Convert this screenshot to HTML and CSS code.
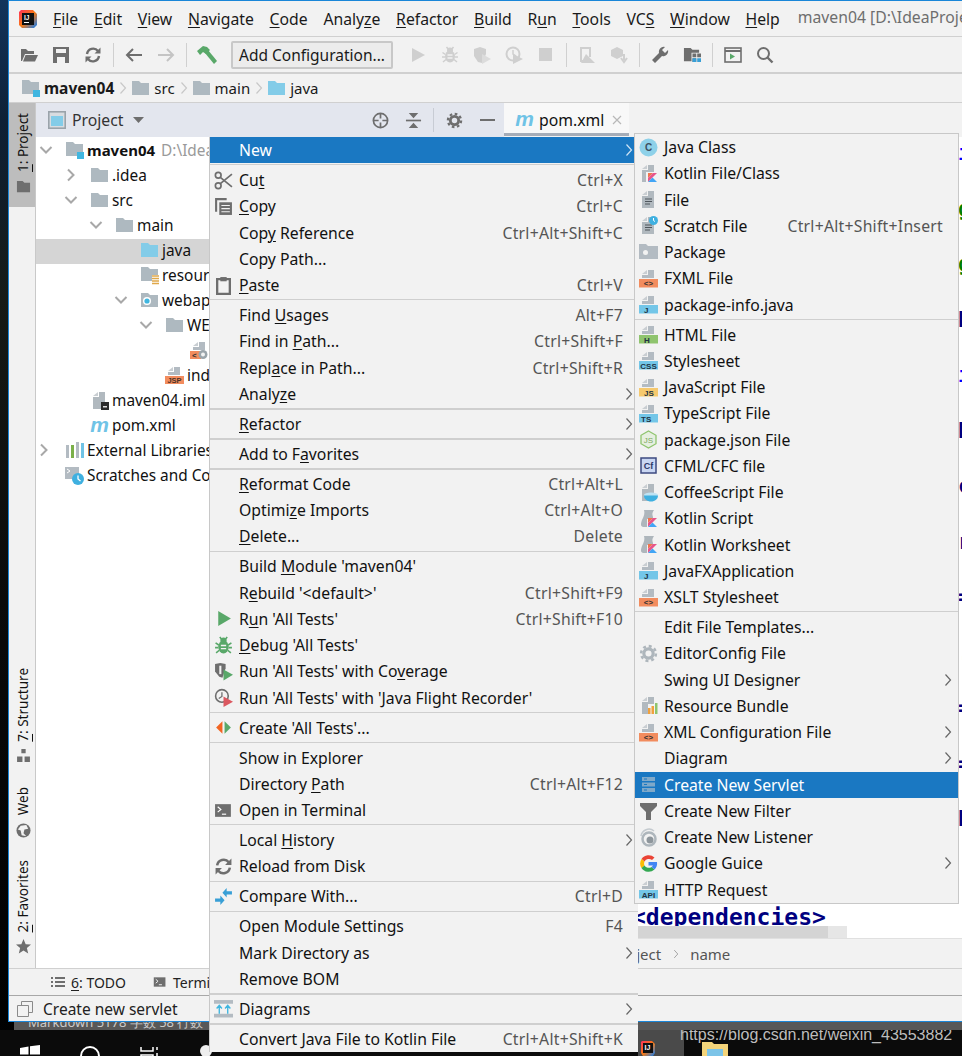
FILE: index.html
```html
<!DOCTYPE html>
<html lang="en">
<head>
<meta charset="utf-8">
<title>maven04</title>
<link rel="stylesheet" href="styles.css">
</head>
<body>
<svg class="defs" aria-hidden="true">
  <defs>
    <linearGradient id="ijg" x1="0" y1="0" x2="1" y2="1"><stop offset="0" stop-color="#fe315d"/><stop offset=".5" stop-color="#f97a12"/><stop offset="1" stop-color="#087cfa"/></linearGradient>
  </defs>
  <symbol id="folder" viewBox="0 0 19 19"><path d="M1 2h7l2 2h8v12H1z" fill="#aeb9c0"/></symbol>
  <symbol id="folder-blue" viewBox="0 0 19 19"><path d="M1 2h7l2 2h8v12H1z" fill="#83cce8"/></symbol>
  <symbol id="folder-mod" viewBox="0 0 19 19"><path d="M1 1h7l2 2h8v12H1z" fill="#aeb9c0"/><rect x="12" y="11" width="7" height="7" fill="#40b6e0"/></symbol>
  <symbol id="folder-res" viewBox="0 0 19 19"><path d="M1 1h7l2 2h8v12H1z" fill="#aeb9c0"/><rect x="12" y="9" width="7" height="9" fill="#fff"/><path d="M12 10h7M12 12.5h7M12 15h7M12 17.5h7" stroke="#e0a84a" stroke-width="1.4"/></symbol>
  <symbol id="folder-web" viewBox="0 0 19 19"><path d="M1 2h7l2 2h8v12H1z" fill="#aeb9c0"/><circle cx="7" cy="10" r="4" fill="#fff"/><circle cx="7" cy="10" r="2.6" fill="#40b6e0"/></symbol>
  <symbol id="ftop" viewBox="0 0 19 19"><path d="M9 1h6v8H3V6h6z" fill="#b3bbc2"/><path d="M3 5l5-4v4z" fill="#c9ced2"/></symbol>
  <symbol id="page" viewBox="0 0 19 19"><path d="M9 1h6v17H3V6h6z" fill="#b1b9bf"/><path d="M3 5l5-4v4z" fill="#c9ced2"/></symbol>
  <symbol id="klogo" viewBox="0 0 19 19"><path d="M9 9h5l-5 5z" fill="#f1734d"/><path d="M9 18v-4l5-5h4z" fill="#e8558a"/><path d="M9 18l4.5-4.5L18 18z" fill="#42a5f5"/></symbol>
  <symbol id="lines" viewBox="0 0 19 19"><path d="M6 9h7M6 11.5h7M6 14h5" stroke="#4f565c" stroke-width="1.2"/></symbol>
  <symbol id="script" viewBox="0 0 19 19"><path d="M5 1h10c-2 3-2 4-1 7v2H8v8H4C1 17 2 14 3 11 5 7 6 4 5 1z" fill="#aeb6bc"/></symbol>
  <symbol id="gear" viewBox="0 0 18 18"><circle cx="9" cy="9" r="4.4" fill="none" stroke="currentColor" stroke-width="3"/><circle cx="9" cy="9" r="7" fill="none" stroke="currentColor" stroke-width="2.4" stroke-dasharray="2.8 2.7"/></symbol>
  <symbol id="sync" viewBox="0 0 18 18"><path d="M3 8a6.2 6.2 0 0 1 11-3" fill="none" stroke="currentColor" stroke-width="2.4"/><path d="M16.500 1.500v6h-6z" fill="currentColor"/><path d="M15 10a6.200 6.200 0 0 1-11 3" fill="none" stroke="currentColor" stroke-width="2.4"/><path d="M1.500 16.500v-6h6z" fill="currentColor"/></symbol>
  <symbol id="term" viewBox="0 0 18 18"><rect x="1" y="3" width="15" height="12" fill="#6e6e6e"/><path d="M3.500 5.500l3 2.500-3 2.500" fill="none" stroke="#fff" stroke-width="1.100"/><path d="M7.500 12.500h4" stroke="#fff" stroke-width="1.100"/></symbol>
  <symbol id="bug" viewBox="0 0 18 18"><ellipse cx="9" cy="10.500" rx="5" ry="6" fill="currentColor"/><circle cx="9" cy="4.500" r="3" fill="currentColor"/><path d="M1.500 6.500l3 2M16.500 6.500l-3 2M1 11h3M17 11h-3M2 16l3-2.500M16 16l-3-2.500M5.500 1l2 2.500M12.500 1l-2 2.500" stroke="currentColor" stroke-width="1.500"/><path d="M6.500 9h5M6.500 12h5" stroke="#f2f2f2" stroke-width="1.300"/></symbol>
  <symbol id="chev" viewBox="0 0 8 14"><path d="M1.500 1.500l5 5.500-5 5.500" fill="none" stroke="currentColor" stroke-width="1.200"/></symbol>
  <symbol id="arrow-d" viewBox="0 0 14 14"><path d="M1.500 4l5.500 5.500L12.500 4" fill="none" stroke="#a8a8a8" stroke-width="2"/></symbol>
  <symbol id="arrow-r" viewBox="0 0 14 14"><path d="M4 1.500L9.500 7 4 12.500" fill="none" stroke="#a8a8a8" stroke-width="2"/></symbol>
  <symbol id="mvn" viewBox="0 0 19 14"><text x="9.500" y="13" text-anchor="middle" font-family="Liberation Sans" font-size="21" font-weight="700" font-style="italic" fill="#6fc3e6">m</text></symbol>
</svg>

<div class="desktop-strip"><span class="strip-text">Markdown 5178 字数 58 行数</span></div>

<div class="window">
  <header class="menubar">
    <svg class="logo" viewBox="0 0 20 20"><path d="M3 1h12l4 4v11l-3 3H4l-3-3V3z" fill="url(#ijg)"/><rect x="4" y="4" width="12" height="12" fill="#111"/><text x="6" y="10.500" font-family="Liberation Sans" font-size="6.500" font-weight="700" fill="#fff">IJ</text><rect x="6" y="13" width="5" height="1" fill="#fff"/></svg>
    <nav class="menus">
      <span><u>F</u>ile</span><span><u>E</u>dit</span><span><u>V</u>iew</span><span><u>N</u>avigate</span><span><u>C</u>ode</span><span>Analy<u>z</u>e</span><span><u>R</u>efactor</span><span><u>B</u>uild</span><span>R<u>u</u>n</span><span><u>T</u>ools</span><span>VC<u>S</u></span><span><u>W</u>indow</span><span><u>H</u>elp</span>
    </nav>
    <span class="wintitle">maven04 [D:\IdeaProjects\maven04]</span>
  </header>

  <div class="toolbar">
    <span class="tb"><svg viewBox="0 0 18 18"><path d="M1 3h5l2 2h6v3H5L2 15H1z" fill="#6e6e6e"/><path d="M5.500 9H18l-3 6.500H3z" fill="#6e6e6e"/></svg></span>
    <span class="tb"><svg viewBox="0 0 18 18"><path d="M1 1h16v16H1z" fill="#6e6e6e"/><rect x="4" y="3" width="10" height="4" fill="#f2f2f2"/><rect x="5" y="11" width="8" height="6" fill="#f2f2f2"/></svg></span>
    <span class="tb tb-gray"><svg><use href="#sync"/></svg></span>
    <i class="tsep"></i>
    <span class="tb"><svg viewBox="0 0 18 18"><path d="M2 9h15M8 3L2 9l6 6" fill="none" stroke="#6e6e6e" stroke-width="2"/></svg></span>
    <span class="tb"><svg viewBox="0 0 18 18"><path d="M16 9H1M10 3l6 6-6 6" fill="none" stroke="#c4c4c4" stroke-width="2"/></svg></span>
    <i class="tsep"></i>
    <span class="tb tb-big"><svg viewBox="0 0 20 20"><path d="M0 6l6-5 4 1 3 3-4 4-3-2-3 3z" fill="#59a869"/><path d="M8 8l3-3 9 11-3 3z" fill="#59a869"/></svg></span>
    <button class="config">Add Configuration...</button>
    <span class="tb"><svg viewBox="0 0 18 18"><path d="M3 2l13 7-13 7z" fill="#cfcfcf"/></svg></span>
    <span class="tb tb-light"><svg><use href="#bug"/></svg></span>
    <span class="tb"><svg viewBox="0 0 18 18"><path d="M1 3l6-2 6 2v5l-4 9-4-1-4-6z" fill="#cfcfcf"/><path d="M9 8l9 5-9 5z" fill="#dcdcdc"/></svg></span>
    <span class="tb"><svg viewBox="0 0 18 18"><circle cx="8" cy="8" r="6.500" fill="none" stroke="#cfcfcf" stroke-width="2"/><path d="M8 4v4l3 2" fill="none" stroke="#cfcfcf" stroke-width="1.500"/><path d="M8 8l10 5-10 5z" fill="#cfcfcf"/></svg></span>
    <span class="tb"><svg viewBox="0 0 18 18"><rect x="2" y="2" width="13" height="13" fill="#cfcfcf"/></svg></span>
    <i class="tsep"></i>
    <span class="tb"><svg viewBox="0 0 18 18"><path d="M2 1h11v10h-2V3H4v11h5v2H2z" fill="#cfcfcf"/><path d="M8 8l9 9H3z" fill="#cfcfcf"/></svg></span>
    <span class="tb"><svg viewBox="0 0 18 18"><path d="M1 4l6-3 6 3v6l-6 3-6-3z" fill="#cfcfcf"/><path d="M14 8v6M11 12l3 4 3-4" fill="none" stroke="#cfcfcf" stroke-width="2"/></svg></span>
    <i class="tsep"></i>
    <span class="tb"><svg viewBox="0 0 18 18"><path d="M17 4l-3 3-3-3 3-3a5 5 0 0 0-6 6L1 14l3 3 7-7a5 5 0 0 0 6-6z" fill="#6e6e6e"/></svg></span>
    <span class="tb"><svg viewBox="0 0 19 19"><path d="M1 2h7l2 2h7v3H9v9H1z" fill="#6e6e6e"/><path d="M10 8h4v4h-4zM15 8h4v4h-4zM10 13h4v4h-4z" fill="#6e6e6e"/><path d="M15 13h4v4h-4zM10 13h4v4h-4z" fill="#389fd6"/></svg></span>
    <i class="tsep"></i>
    <span class="tb"><svg viewBox="0 0 18 18"><rect x="1" y="2" width="16" height="14" fill="none" stroke="#6e6e6e" stroke-width="1.600"/><path d="M1 5h16" stroke="#6e6e6e" stroke-width="2"/><path d="M6 7.500l5 3-5 3z" fill="#59a869"/></svg></span>
    <span class="tb"><svg viewBox="0 0 18 18"><circle cx="7.500" cy="7.500" r="5.500" fill="none" stroke="#6e6e6e" stroke-width="2"/><path d="M11.500 11.500l5 5" stroke="#6e6e6e" stroke-width="2.400"/></svg></span>
  </div>

  <div class="crumbs">
    <svg class="c-ico"><use href="#folder-mod"/></svg><b class="c-text">maven04</b><svg class="c-chev"><use href="#chev"/></svg>
    <svg class="c-ico"><use href="#folder"/></svg><span class="c-text">src</span><svg class="c-chev"><use href="#chev"/></svg>
    <svg class="c-ico"><use href="#folder"/></svg><span class="c-text">main</span><svg class="c-chev"><use href="#chev"/></svg>
    <svg class="c-ico"><use href="#folder-blue"/></svg><span class="c-text">java</span>
  </div>

  <div class="main">
    <aside class="strip">
      <div class="strip-btn active"><span class="vtext"><u>1</u>: Project</span><svg viewBox="0 0 16 14"><path d="M1 1h6l2 2h6v10H1z" fill="#6e6e6e"/></svg></div>
      <div class="strip-fill"></div>
      <div class="strip-btn"><span class="vtext"><u>7</u>: Structure</span><svg viewBox="0 0 14 14"><path d="M5 1h4v4H5zM1 8h5v5H1zM8 8h5v5H8z" fill="#6e6e6e"/></svg></div>
      <div class="strip-btn web"><span class="vtext">Web</span><svg viewBox="0 0 16 16"><circle cx="8" cy="8" r="7.500" fill="#6e6e6e"/><path d="M5 3l6-1 2 4-4 1-1 4 3 3-5-1-1-5-3-1z" fill="#f2f2f2"/></svg></div>
      <div class="strip-btn fav"><span class="vtext"><u>2</u>: Favorites</span><svg viewBox="0 0 16 16"><path d="M8 0l2.300 5.500 5.700.400-4.400 3.700 1.400 5.800L8 12.300 3 15.400l1.400-5.800L0 5.900l5.700-.400z" fill="#6e6e6e"/></svg></div>
    </aside>

    <section class="project">
      <div class="proj-head">
        <svg class="ph-ico" viewBox="0 0 18 18"><rect x=".800" y=".800" width="16.400" height="16.400" fill="#d8dce0" stroke="#9aa3aa" stroke-width="1.600"/><rect x="3" y="5" width="12" height="10" fill="#83cce8"/></svg>
        <span class="ph-title">Project</span>
        <svg class="ph-drop" viewBox="0 0 11 6"><path d="M0 0h11L5.500 6z" fill="#6e6e6e"/></svg>
        <span class="ph-fill"></span>
        <svg class="ph-btn" viewBox="0 0 18 18"><circle cx="9" cy="9" r="7.500" fill="none" stroke="#6e6e6e" stroke-width="1.800"/><path d="M9 1v6M9 11v6M1 9h6M11 9h6" stroke="#6e6e6e" stroke-width="1.800"/></svg>
        <svg class="ph-btn ph-col" viewBox="0 0 18 18"><path d="M1 9h16" stroke="#6e6e6e" stroke-width="1.800"/><path d="M4 1h10L9 6.500zM4 17h10l-5-5.500z" fill="#6e6e6e"/></svg>
        <i class="ph-sep"></i>
        <svg class="ph-btn ph-gear"><use href="#gear"/></svg>
        <svg class="ph-btn ph-min" viewBox="0 0 15 3"><rect width="15" height="2" fill="#6e6e6e"/></svg>
      </div>
      <div class="tree">
        <div class="node l0"><svg class="tw"><use href="#arrow-d"/></svg><svg class="ni"><use href="#folder-mod"/></svg><b>maven04</b><span class="dim">D:\IdeaProjects\maven04</span></div>
        <div class="node l1"><svg class="tw"><use href="#arrow-r"/></svg><svg class="ni"><use href="#folder"/></svg><span>.idea</span></div>
        <div class="node l1"><svg class="tw"><use href="#arrow-d"/></svg><svg class="ni"><use href="#folder"/></svg><span>src</span></div>
        <div class="node l2"><svg class="tw"><use href="#arrow-d"/></svg><svg class="ni"><use href="#folder"/></svg><span>main</span></div>
        <div class="node l3 sel"><i class="tw"></i><svg class="ni"><use href="#folder-blue"/></svg><span>java</span></div>
        <div class="node l3"><i class="tw"></i><svg class="ni"><use href="#folder-res"/></svg><span>resources</span></div>
        <div class="node l3"><svg class="tw"><use href="#arrow-d"/></svg><svg class="ni"><use href="#folder-web"/></svg><span>webapp</span></div>
        <div class="node l4"><svg class="tw"><use href="#arrow-d"/></svg><svg class="ni"><use href="#folder"/></svg><span>WEB-INF</span></div>
        <div class="node l5"><i class="tw"></i><svg class="ni" viewBox="0 0 19 19"><use href="#ftop"/><rect y="10" width="11" height="8" fill="#f28c5e"/><text x="2" y="17" font-family="Liberation Sans" font-size="8" font-weight="700" fill="#333">&lt;</text><circle cx="13" cy="13.500" r="4.500" fill="#9aa4aa"/><circle cx="13" cy="13.500" r="2" fill="#f2f2f2"/></svg><span>web.xml</span></div>
        <div class="node l4"><i class="tw"></i><svg class="ni" viewBox="0 0 19 19"><use href="#ftop"/><rect y="10" width="19" height="8" fill="#f28c5e"/><text x="9.500" y="17" text-anchor="middle" font-family="Liberation Sans" font-size="7.500" font-weight="700" fill="#4a3328">JSP</text></svg><span>index.jsp</span></div>
        <div class="node l1"><i class="tw"></i><svg class="ni" viewBox="0 0 19 19"><use href="#page"/><rect x="11" y="11" width="8" height="8" fill="#2b2b2b"/><rect x="13" y="15" width="4" height="1.500" fill="#ddd"/></svg><span>maven04.iml</span></div>
        <div class="node l1"><i class="tw"></i><svg class="ni"><use href="#mvn"/></svg><span>pom.xml</span></div>
        <div class="node l0"><svg class="tw tw-ext"><use href="#arrow-r"/></svg><svg class="ni" viewBox="0 0 19 19"><path d="M1 4h3v13H1zM11 4h3v13h-3z" fill="#b3bbc2"/><path d="M6 4h3v13H6z" fill="#7bb04a"/><path d="M16 2h3v15h-3z" fill="#6fc3e6"/><path d="M11 1h3v3h-3z" fill="#b3bbc2"/></svg><span>External Libraries</span></div>
        <div class="node l0"><i class="tw"></i><svg class="ni" viewBox="0 0 19 19"><path d="M0 1h14v12H0z" fill="#b3bbc2"/><path d="M2 3l3 2-3 2" fill="none" stroke="#fff" stroke-width="1"/><circle cx="13" cy="13" r="6" fill="#3fb0e0"/><path d="M13 9.500V13l2.500 2" fill="none" stroke="#fff" stroke-width="1.300"/></svg><span>Scratches and Consoles</span></div>
      </div>
    </section>

    <section class="editor">
      <div class="tabs">
        <div class="tab"><svg class="tab-ico"><use href="#mvn"/></svg><span>pom.xml</span><svg class="tab-x" viewBox="0 0 10 10"><path d="M1 1l8 8M9 1L1 9" stroke="#b8b8b8" stroke-width="1.200"/></svg></div>
      </div>
      <div class="code">
        <div class="code-top">
          <div class="cl blue">i</div><div class="cl green">g</div><div class="cl green">g</div><div class="cl navy">b</div><div class="cl blue">i</div><div class="cl navy">b</div><div class="cl navy">c</div><div class="cl navy">r</div><div class="cl navy">=</div><div class="cl navy">.</div><div class="cl navy">=</div><div class="cl navy">=</div><div class="cl navy">b</div>
        </div>
        <div class="cl-dep">&lt;dependencies&gt;</div>
        <div class="cl-shade"></div>
      </div>
      <div class="ed-crumb"><span>project</span><svg viewBox="0 0 8 14"><use href="#chev"/></svg><span>name</span></div>
    </section>
  </div>

  <div class="toolwin">
    <span class="tw-item"><svg viewBox="0 0 14 12"><path d="M0 1h2v2H0zM4 1h10v2H4zM0 5h2v2H0zM4 5h10v2H4zM0 9h2v2H0zM4 9h10v2H4z" fill="#6e6e6e"/></svg><span><u>6</u>: TODO</span></span>
    <span class="tw-item"><svg><use href="#term"/></svg><span>Terminal</span></span>
  </div>
  <footer class="status">
    <svg viewBox="0 0 16 16"><path d="M4.500.500h11v11h-11z" fill="none" stroke="#8a8a8a"/><path d="M.500 4.500h11v11H.500z" fill="#f2f2f2" stroke="#8a8a8a"/></svg>
    <span>Create new servlet</span>
  </footer>
</div>

<div class="taskbar">
  <svg class="t-win" viewBox="0 0 20 20"><path d="M0 3l8.500-1.500V9.500H0zM10 1.200L20 0v9.500H10zM0 11h8.500v7.500L0 17zM10 11h10v9L10 18.800z" fill="#fff"/></svg>
  <svg class="t-search" viewBox="0 0 20 20"><circle cx="10" cy="10" r="9" fill="none" stroke="#fff" stroke-width="2"/></svg>
  <svg class="t-view" viewBox="0 0 20 20"><path d="M1 1v4h12V1M1 19V9h12v10M17 1v3M17 7v3" fill="none" stroke="#fff" stroke-width="1.500"/></svg>
  <svg class="t-cortana" viewBox="0 0 12 12"><circle cx="6" cy="6" r="6" fill="#eee"/></svg>
  <span class="t-active"><svg viewBox="0 0 16 16"><path d="M2 1h10l3 3v9l-2 3H3l-2-3V2z" fill="url(#ijg)"/><rect x="3" y="3" width="10" height="10" fill="#111"/><text x="4.500" y="10" font-family="Liberation Sans" font-size="7" font-weight="700" fill="#fff">IJ</text></svg></span>
  <svg class="t-folder" viewBox="0 0 26 18"><path d="M0 0h10l2 2h14v16H0z" fill="#f4d47a"/><rect x="5" y="7" width="16" height="8" fill="#7cc4e8"/></svg>
  <span class="watermark">https://blog.csdn.net/weixin_43553882</span>
</div>

<div class="menu">
  <div class="row hi"><span class="ico"></span><span class="lbl">New</span><svg class="more"><use href="#chev"/></svg></div>
  <div class="sep"></div>
  <div class="row"><span class="ico"><svg viewBox="0 0 18 18"><circle cx="4" cy="4" r="2.700" fill="none" stroke="#6e6e6e" stroke-width="1.600"/><circle cx="4" cy="14" r="2.700" fill="none" stroke="#6e6e6e" stroke-width="1.600"/><path d="M6 6l11 9M6 12L17 3" stroke="#6e6e6e" stroke-width="1.600"/></svg></span><span class="lbl">Cu<u>t</u></span><span class="key">Ctrl+X</span></div>
  <div class="row"><span class="ico"><svg viewBox="0 0 18 18"><path d="M1 1h11v2H3v11H1z" fill="#6e6e6e"/><rect x="5" y="5" width="12" height="12" fill="#6e6e6e"/><path d="M7 8h8M7 11h8M7 14h8" stroke="#f2f2f2"/></svg></span><span class="lbl"><u>C</u>opy</span><span class="key">Ctrl+C</span></div>
  <div class="row"><span class="ico"></span><span class="lbl">Cop<u>y</u> Reference</span><span class="key">Ctrl+Alt+Shift+C</span></div>
  <div class="row"><span class="ico"></span><span class="lbl">Copy Path...</span></div>
  <div class="row"><span class="ico"><svg viewBox="0 0 18 18"><path d="M3 3h12v14H3z" fill="none" stroke="#6e6e6e" stroke-width="2.200"/><rect x="6" y="1" width="6" height="4" fill="#6e6e6e"/></svg></span><span class="lbl"><u>P</u>aste</span><span class="key">Ctrl+V</span></div>
  <div class="sep"></div>
  <div class="row"><span class="ico"></span><span class="lbl">Find <u>U</u>sages</span><span class="key">Alt+F7</span></div>
  <div class="row"><span class="ico"></span><span class="lbl">Find in <u>P</u>ath...</span><span class="key">Ctrl+Shift+F</span></div>
  <div class="row"><span class="ico"></span><span class="lbl">Repl<u>a</u>ce in Path...</span><span class="key">Ctrl+Shift+R</span></div>
  <div class="row"><span class="ico"></span><span class="lbl">Analy<u>z</u>e</span><svg class="more"><use href="#chev"/></svg></div>
  <div class="sep thick"></div>
  <div class="row"><span class="ico"></span><span class="lbl"><u>R</u>efactor</span><svg class="more"><use href="#chev"/></svg></div>
  <div class="sep thick"></div>
  <div class="row"><span class="ico"></span><span class="lbl">Add to F<u>a</u>vorites</span><svg class="more"><use href="#chev"/></svg></div>
  <div class="sep thick"></div>
  <div class="row"><span class="ico"></span><span class="lbl"><u>R</u>eformat Code</span><span class="key">Ctrl+Alt+L</span></div>
  <div class="row"><span class="ico"></span><span class="lbl">Optimi<u>z</u>e Imports</span><span class="key">Ctrl+Alt+O</span></div>
  <div class="row"><span class="ico"></span><span class="lbl"><u>D</u>elete...</span><span class="key">Delete</span></div>
  <div class="sep"></div>
  <div class="row"><span class="ico"></span><span class="lbl">Build <u>M</u>odule 'maven04'</span></div>
  <div class="row"><span class="ico"></span><span class="lbl">R<u>e</u>build '&lt;default&gt;'</span><span class="key">Ctrl+Shift+F9</span></div>
  <div class="row"><span class="ico"><svg viewBox="0 0 18 18"><path d="M4 2l12 7-12 7z" fill="#59a869"/></svg></span><span class="lbl">R<u>u</u>n 'All Tests'</span><span class="key">Ctrl+Shift+F10</span></div>
  <div class="row"><span class="ico i-green"><svg><use href="#bug"/></svg></span><span class="lbl"><u>D</u>ebug 'All Tests'</span></div>
  <div class="row"><span class="ico"><svg viewBox="0 0 18 18"><path d="M1 2l5-1 5 1v4L8 15l-3-1-4-5z" fill="#6e6e6e"/><path d="M5 3.500h2v8H5z" fill="#f2f2f2"/><path d="M9 7l9 5-9 5.500z" fill="#59a869"/></svg></span><span class="lbl">Run 'All Tests' with Co<u>v</u>erage</span></div>
  <div class="row"><span class="ico"><svg viewBox="0 0 18 18"><circle cx="7.500" cy="7.500" r="6" fill="none" stroke="#6e6e6e" stroke-width="1.500"/><path d="M7.500 4v4l-3 2" fill="none" stroke="#6e6e6e" stroke-width="1.200"/><path d="M9 8l9 5-9 5z" fill="#db5860"/></svg></span><span class="lbl">Run 'All Tests' with 'Java Flight Recorder'</span></div>
  <div class="sep"></div>
  <div class="row"><span class="ico"><svg viewBox="0 0 18 18"><path d="M8 3v12L2 9z" fill="#f26522"/><path d="M10 3v12l6-6z" fill="#59a869"/></svg></span><span class="lbl">Create 'All Tests'...</span></div>
  <div class="sep"></div>
  <div class="row"><span class="ico"></span><span class="lbl">Show in Explorer</span></div>
  <div class="row"><span class="ico"></span><span class="lbl">Directory <u>P</u>ath</span><span class="key">Ctrl+Alt+F12</span></div>
  <div class="row"><span class="ico"><svg><use href="#term"/></svg></span><span class="lbl">Open in Terminal</span></div>
  <div class="sep"></div>
  <div class="row"><span class="ico"></span><span class="lbl">Local <u>H</u>istory</span><svg class="more"><use href="#chev"/></svg></div>
  <div class="row"><span class="ico i-gray"><svg><use href="#sync"/></svg></span><span class="lbl">Reload from Disk</span></div>
  <div class="sep"></div>
  <div class="row"><span class="ico"><svg viewBox="0 0 18 18"><path d="M1 11h5V8l4 4.500L6 17v-3H1z" fill="#389fd6"/><path d="M17 4h-5V1L8 5.500l4 4.500V7h5z" fill="#389fd6"/></svg></span><span class="lbl">Compare With...</span><span class="key">Ctrl+D</span></div>
  <div class="sep"></div>
  <div class="row"><span class="ico"></span><span class="lbl">Open Module Settings</span><span class="key">F4</span></div>
  <div class="row"><span class="ico"></span><span class="lbl">Mark Directory as</span><svg class="more"><use href="#chev"/></svg></div>
  <div class="row"><span class="ico"></span><span class="lbl">Remove BOM</span></div>
  <div class="sep thick"></div>
  <div class="row"><span class="ico"><svg viewBox="0 0 18 18"><rect width="18" height="3.500" y="1" fill="#b3bbc2"/><rect width="18" height="3.500" y="14" fill="#b3bbc2"/><path d="M5 14V7M2.500 9L5 6l2.500 3M13 14V7M10.500 9L13 6l2.500 3" fill="none" stroke="#40b6e0" stroke-width="1.300"/></svg></span><span class="lbl">Diagrams</span><svg class="more"><use href="#chev"/></svg></div>
  <div class="sep thick"></div>
  <div class="row"><span class="ico"></span><span class="lbl">Convert Java File to Kotlin File</span><span class="key">Ctrl+Alt+Shift+K</span></div>
</div>

<div class="menu sub">
  <div class="row"><span class="ico"><svg viewBox="0 0 19 19"><circle cx="9.500" cy="9.500" r="9" fill="#8ed1e9"/><text x="9.500" y="13" text-anchor="middle" font-family="Liberation Sans" font-size="10" font-weight="700" fill="#3e5060">C</text></svg></span><span class="lbl">Java Class</span></div>
  <div class="row"><span class="ico"><svg viewBox="0 0 19 19"><use href="#page"/><rect x="7" y="8" width="12" height="11" fill="#f2f2f2"/><use href="#klogo"/></svg></span><span class="lbl">Kotlin File/Class</span></div>
  <div class="row"><span class="ico"><svg viewBox="0 0 19 19"><use href="#page"/><use href="#lines"/></svg></span><span class="lbl">File</span></div>
  <div class="row"><span class="ico"><svg viewBox="0 0 19 19"><use href="#page"/><use href="#lines"/><circle cx="14.500" cy="4.500" r="4.500" fill="#3fb0e0"/><path d="M14.500 2v2.500l1.500 1" fill="none" stroke="#fff"/></svg></span><span class="lbl">Scratch File</span><span class="key">Ctrl+Alt+Shift+Insert</span></div>
  <div class="row"><span class="ico"><svg viewBox="0 0 19 19"><path d="M0 1h7l2 2h10v13H0z" fill="#b3bbc2"/><circle cx="6.500" cy="9.500" r="2.500" fill="#f2f2f2"/></svg></span><span class="lbl">Package</span></div>
  <div class="row"><span class="ico"><svg viewBox="0 0 19 19"><use href="#ftop"/><rect y="10" width="19" height="8.500" fill="#f28c5e"/><text x="9.500" y="17" text-anchor="middle" font-family="Liberation Sans" font-size="8" font-weight="700" fill="#333">&lt;&gt;</text></svg></span><span class="lbl">FXML File</span></div>
  <div class="row"><span class="ico"><svg viewBox="0 0 19 19"><use href="#ftop"/><rect y="10" width="19" height="8.500" fill="#73c6e8"/><text x="5" y="17.500" font-family="Liberation Sans" font-size="8" font-weight="700" fill="#234">J</text></svg></span><span class="lbl">package-info.java</span></div>
  <div class="sep"></div>
  <div class="row"><span class="ico"><svg viewBox="0 0 19 19"><use href="#ftop"/><rect y="10" width="19" height="8.500" fill="#8fc46e"/><text x="5" y="17.500" font-family="Liberation Sans" font-size="8" font-weight="700" fill="#234">H</text></svg></span><span class="lbl">HTML File</span></div>
  <div class="row"><span class="ico"><svg viewBox="0 0 19 19"><use href="#ftop"/><rect y="10" width="19" height="8.500" fill="#73c6e8"/><text x="9.500" y="17.500" text-anchor="middle" font-family="Liberation Sans" font-size="8" font-weight="700" fill="#234">CSS</text></svg></span><span class="lbl">Stylesheet</span></div>
  <div class="row"><span class="ico"><svg viewBox="0 0 19 19"><use href="#ftop"/><rect y="10" width="19" height="8.500" fill="#f6c96e"/><text x="5" y="17.500" font-family="Liberation Sans" font-size="8" font-weight="700" fill="#234">JS</text></svg></span><span class="lbl">JavaScript File</span></div>
  <div class="row"><span class="ico"><svg viewBox="0 0 19 19"><use href="#ftop"/><rect y="10" width="19" height="8.500" fill="#73c6e8"/><text x="2" y="17.500" font-family="Liberation Sans" font-size="8" font-weight="700" fill="#234">TS</text></svg></span><span class="lbl">TypeScript File</span></div>
  <div class="row"><span class="ico"><svg viewBox="0 0 19 19"><path d="M9.500 1l7.500 4.300v8.400L9.500 18 2 13.700V5.300z" fill="#e6efe0" stroke="#8fc46e" stroke-width="1.300"/><text x="9.500" y="13" text-anchor="middle" font-family="Liberation Sans" font-size="8" fill="#79a85c">JS</text></svg></span><span class="lbl">package.json File</span></div>
  <div class="row"><span class="ico"><svg viewBox="0 0 19 19"><rect x="2" y="2" width="15" height="15" fill="#c9d6f2" stroke="#3d4a80" stroke-width="1.500"/><text x="9.500" y="13" text-anchor="middle" font-family="Liberation Sans" font-size="9" font-weight="700" fill="#2c3868">Cf</text></svg></span><span class="lbl">CFML/CFC file</span></div>
  <div class="row"><span class="ico"><svg viewBox="0 0 19 19"><use href="#page"/><ellipse cx="12" cy="12" rx="7" ry="2.500" fill="#bfe3f3"/><path d="M5 12.500h14c0 3.500-3 6-7 6s-7-2.500-7-6z" fill="#3fb0e0"/></svg></span><span class="lbl">CoffeeScript File</span></div>
  <div class="row"><span class="ico"><svg viewBox="0 0 19 19"><use href="#script"/><use href="#klogo"/></svg></span><span class="lbl">Kotlin Script</span></div>
  <div class="row"><span class="ico"><svg viewBox="0 0 19 19"><use href="#script"/><use href="#klogo"/></svg></span><span class="lbl">Kotlin Worksheet</span></div>
  <div class="row"><span class="ico"><svg viewBox="0 0 19 19"><use href="#ftop"/><rect y="10" width="19" height="8.500" fill="#73c6e8"/><text x="5" y="17.500" font-family="Liberation Sans" font-size="8" font-weight="700" fill="#234">J</text></svg></span><span class="lbl">JavaFXApplication</span></div>
  <div class="row"><span class="ico"><svg viewBox="0 0 19 19"><use href="#ftop"/><rect y="10" width="19" height="8.500" fill="#f28c5e"/><text x="9.500" y="17" text-anchor="middle" font-family="Liberation Sans" font-size="8" font-weight="700" fill="#333">&lt;&gt;</text></svg></span><span class="lbl">XSLT Stylesheet</span></div>
  <div class="sep"></div>
  <div class="row"><span class="ico"></span><span class="lbl">Edit File Templates...</span></div>
  <div class="row"><span class="ico i-lgray"><svg><use href="#gear"/></svg></span><span class="lbl">EditorConfig File</span></div>
  <div class="row"><span class="ico"></span><span class="lbl">Swing UI Designer</span><svg class="more"><use href="#chev"/></svg></div>
  <div class="row"><span class="ico"><svg viewBox="0 0 19 19"><use href="#page"/><rect x="9" y="8" width="10" height="11" fill="#f2f2f2"/><path d="M9 12h2.500v6H9z" fill="#f0a03c"/><path d="M12.500 10H15v8h-2.500z" fill="#f0a03c"/><path d="M16 7h2.500v11H16z" fill="#8fc46e"/></svg></span><span class="lbl">Resource Bundle</span></div>
  <div class="row"><span class="ico"><svg viewBox="0 0 19 19"><use href="#ftop"/><rect y="10" width="19" height="8.500" fill="#f28c5e"/><text x="9.500" y="17" text-anchor="middle" font-family="Liberation Sans" font-size="8" font-weight="700" fill="#333">&lt;&gt;</text></svg></span><span class="lbl">XML Configuration File</span><svg class="more"><use href="#chev"/></svg></div>
  <div class="row"><span class="ico"></span><span class="lbl">Diagram</span><svg class="more"><use href="#chev"/></svg></div>
  <div class="row hi"><span class="ico"><svg viewBox="0 0 19 19"><path d="M3 2h13v4H3zM3 7.500h13v4H3zM3 13h13v4H3z" fill="#7fa9c9"/><path d="M5 4h3M5 9.500h3M5 15h3" stroke="#1a78c2"/></svg></span><span class="lbl">Create New Servlet</span></div>
  <div class="row"><span class="ico"><svg viewBox="0 0 19 19"><path d="M1 2h17v3l-6 6v8H7v-8L1 5z" fill="#6e6e6e"/></svg></span><span class="lbl">Create New Filter</span></div>
  <div class="row"><span class="ico"><svg viewBox="0 0 19 19"><circle cx="10" cy="11" r="6.500" fill="none" stroke="#aeb6bc" stroke-width="2.500"/><circle cx="11" cy="12" r="3.500" fill="#8e969c"/><path d="M2 8a8 8 0 0 1 13-5" fill="none" stroke="#c4cacf" stroke-width="1.500"/></svg></span><span class="lbl">Create New Listener</span></div>
  <div class="row"><span class="ico"><svg viewBox="0 0 19 19"><path d="M15.500 3.500A8.500 8.500 0 0 0 2.500 5l3 2.500a5 5 0 0 1 7.500-1.500z" fill="#ea4335"/><path d="M2.500 5a8.500 8.500 0 0 0 0 9l3-2.500a5 5 0 0 1 0-4z" fill="#fbbc05"/><path d="M2.500 14a8.500 8.500 0 0 0 13 1.500l-3-2.500a5 5 0 0 1-7-1.500z" fill="#34a853"/><path d="M15.500 15.500c2-2 3-4.500 2.500-7.500H9.500v3.500h4.500a4 4 0 0 1-1.500 1.500z" fill="#4285f4"/></svg></span><span class="lbl">Google Guice</span><svg class="more"><use href="#chev"/></svg></div>
  <div class="row"><span class="ico"><svg viewBox="0 0 19 19"><use href="#ftop"/><rect y="10" width="19" height="8.500" fill="#73c6e8"/><text x="9.500" y="17.500" text-anchor="middle" font-family="Liberation Sans" font-size="8" font-weight="700" fill="#234">API</text></svg></span><span class="lbl">HTTP Request</span></div>
</div>
</body>
</html>
```

FILE: styles.css
```css
* { box-sizing: border-box; }
html, body { margin: 0; padding: 0; }
body {
  position: relative;
  width: 962px;
  height: 1056px;
  overflow: hidden;
  background: linear-gradient(180deg, #12345c 0, #0e2036 120px, #161a16 300px, #0a0a0a 600px, #000 1056px);
  font-family: "Noto Sans", "Open Sans", sans-serif;
  font-size: 15.75px;
  color: #111;
}
u { text-decoration-thickness: 1px; text-underline-offset: 2px; }
.defs { position: absolute; width: 0; height: 0; }

/* desktop */
.desktop-strip {
  position: absolute; left: 14px; right: 0; top: 1022px; height: 8px;
  background: #585858; overflow: hidden;
}
.strip-text { position: absolute; left: 14px; top: -9px; color: #ccc; font-size: 13px; }
.taskbar {
  position: absolute; left: 0; right: 0; top: 1030px; height: 26px;
  background: #0b0b0b; display: flex; align-items: flex-start; overflow: hidden;
}
.t-win { width: 20px; height: 20px; margin: 15px 0 0 20px; flex: none; }
.t-search { width: 20px; height: 20px; margin: 16px 0 0 40px; flex: none; }
.t-view { width: 20px; height: 20px; margin: 16px 0 0 40px; flex: none; }
.t-cortana { width: 12px; height: 12px; margin: 15px 0 0 40px; flex: none; }
.t-active { width: 46px; height: 26px; margin-left: 426px; background: #4a4a4a; flex: none; padding: 10px 0 0 2px; }
.t-active svg { width: 16px; height: 16px; display: block; }
.t-folder { width: 26px; height: 18px; margin: 12px 0 0 18px; flex: none; }
.watermark {
  position: absolute; left: 680px; top: -4px;
  font-family: "Liberation Sans", sans-serif; font-size: 16px; color: #bdbdbd; white-space: nowrap;
}

/* window */
.window {
  position: absolute; left: 8px; top: 0; width: 954px; height: 1022px;
  background: #f2f2f2;
  border-left: 1px solid #1a86d8; border-top: 1px solid #1a86d8; border-bottom: 1px solid #1a86d8;
  display: flex; flex-direction: column; overflow: hidden;
}
.menubar {
  height: 36px; flex: none; display: flex; align-items: center;
  border-bottom: 1px solid #d0d0d0; padding-left: 9px; white-space: nowrap;
}
.logo { width: 20px; height: 20px; flex: none; }
.menus { display: flex; gap: 15.7px; margin-left: 15px; color: #1a1a1a; }
.wintitle { margin-left: 18px; color: #6e6e6e; margin-top: -3px; }

.toolbar {
  height: 37px; flex: none; display: flex; align-items: center;
  border-bottom: 2px solid #d0d0d0; padding-left: 4px;
}
.tb { width: 32px; height: 20px; display: flex; justify-content: center; align-items: center; flex: none; }
.tb svg { width: 18px; height: 18px; display: block; }
.tb-big svg { width: 20px; height: 20px; }
.tb-gray { color: #6e6e6e; }
.tb-light { color: #cfcfcf; }
.tsep { width: 1px; height: 24px; background: #d0d0d0; margin: 0 4px; flex: none; }
.config {
  width: 162px; height: 28px; margin: 0 9px 0 8px; flex: none;
  background: #ececec; border: 2px solid #c8c8c8; border-radius: 2px;
  font: inherit; font-size: 15.5px; color: #1a1a1a; padding: 0;
}

.crumbs {
  height: 29px; flex: none; display: flex; align-items: center;
  border-bottom: 1px solid #d0d0d0; padding-left: 12px; color: #1a1a1a; font-size: 15px;
}
.crumbs b { font-weight: 700; font-size: 15.5px; }
.c-ico { width: 19px; height: 19px; flex: none; }
.c-text { margin-left: 4px; }
.c-chev { width: 8px; height: 22px; color: #c8c8c8; margin: 0 4px 0 5px; flex: none; }

.main { flex: 1; min-height: 0; display: flex; }
.strip {
  width: 27px; flex: none; display: flex; flex-direction: column; align-items: stretch;
  border-right: 1px solid #c9c9c9; background: #f2f2f2;
}
.strip-btn { display: flex; flex-direction: column; align-items: center; gap: 7px; font-size: 13.5px; padding-left: 2px; }
.strip-btn.active { height: 104px; background: #bdbdbd; padding-top: 10px; }
.strip-btn svg { width: 15px; height: 15px; flex: none; }
.strip-fill { flex: 1; }
.strip-btn.web { margin-top: 24px; }
.strip-btn.fav { margin-top: 22px; margin-bottom: 14px; }
.vtext { writing-mode: vertical-rl; transform: rotate(180deg); white-space: nowrap; }

.project { width: 468px; flex: none; display: flex; flex-direction: column; background: #fff; }
.proj-head {
  height: 34px; flex: none; background: #e3e6ee; display: flex; align-items: center; padding-left: 12px;
}
.ph-ico { width: 18px; height: 18px; flex: none; }
.ph-title { margin-left: 6px; color: #333; }
.ph-drop { width: 11px; height: 6px; margin-left: 10px; }
.ph-fill { flex: 1; }
.ph-btn { width: 17px; height: 17px; margin-right: 16px; color: #6e6e6e; flex: none; }
.ph-col { margin-right: 11px; }
.ph-sep { width: 1px; height: 24px; background: #c8ccd4; margin-right: 12px; }
.ph-gear { margin-right: 17px; }
.ph-min { width: 15px; height: 3px; margin-right: 9px; }

.tree { flex: 1; padding-top: 2px; overflow: hidden; font-size: 15.4px; }
.node { height: 25px; display: flex; align-items: center; white-space: nowrap; color: #111; padding-bottom: 3px; }
.node b { font-weight: 700; font-size: 15px; }
.l0 { padding-left: 3px; }
.l1 { padding-left: 28px; }
.l2 { padding-left: 53px; }
.l3 { padding-left: 78px; }
.l4 { padding-left: 103px; }
.l5 { padding-left: 128px; }
.sel { background: #d5d5d5; }
.tw { width: 14px; height: 14px; margin-right: 12px; flex: none; }
.tw-ext { margin-left: -2px; margin-right: 14px; }
.ni { width: 19px; height: 19px; margin-right: 3px; flex: none; }
.dim { color: #9a9a9a; margin-left: 6px; }

.editor { flex: 1; min-width: 0; display: flex; flex-direction: column; background: #fff; }
.tabs { height: 34px; flex: none; background: #f2f2f2; }
.tab {
  width: 125px; height: 33px; background: #f8f8f8; border-bottom: 3px solid #a6adb8;
  display: flex; align-items: center; padding: 4px 0 0 11px; color: #111;
}
.tab-ico { width: 19px; height: 14px; flex: none; }
.tab span { margin-left: 5px; }
.tab-x { width: 10px; height: 10px; margin-left: 8px; flex: none; }
.code { flex: 1; min-height: 0; display: flex; flex-direction: column; overflow: hidden; }
.code-top {
  flex: 1; display: flex; flex-direction: column; justify-content: space-between;
  padding: 6px 0 76px 454px; font: 700 21px "DejaVu Sans Mono", monospace;
}
.cl { height: 20px; line-height: 20px; }
.blue { color: #0000ff; }
.green { color: #008000; }
.navy { color: #000080; }
.cl-dep {
  height: 21px; background: #fff; padding-left: 128px; white-space: nowrap;
  font: 700 23px/24px "DejaVu Sans Mono", monospace; color: #000080;
  flex: none;
}
.cl-shade {
  height: 12px; flex: none; margin-left: 134px; width: 209px;
  background: linear-gradient(90deg, #d4d4d4 0, #d4d4d4 190px, #e6e6e6 190px);
}
.ed-crumb {
  height: 30px; flex: none; background: #f2f2f2; border-top: 1px solid #e0e0e0;
  display: flex; align-items: center; padding-left: 108px; color: #555; font-size: 15px;
}
.ed-crumb svg { width: 6px; height: 10px; color: #999; margin: 0 11px 0 12px; }

.toolwin {
  height: 28px; flex: none; border-top: 1px solid #d0d0d0; border-bottom: 1px solid #a8a8a8;
  display: flex; align-items: center; padding-left: 42px; gap: 27px; white-space: nowrap;
  font-size: 14px; color: #222;
}
.tw-item { display: flex; align-items: center; gap: 6px; }
.tw-item svg { width: 14px; height: 14px; flex: none; }
.status {
  height: 25px; flex: none; display: flex; align-items: center; padding-left: 8px; color: #222; font-size: 15.5px;
}
.status svg { width: 16px; height: 16px; flex: none; }
.status span { margin-left: 10px; }

/* popup menus */
.menu {
  position: absolute; left: 209px; top: 137px; width: 429px;
  background: #f2f2f2; border-left: 1px solid #c8c8c8;
  color: #111;
}
.sub {
  left: 634px; top: 133px; width: 325px;
  border: 1px solid #c8c8c8;
}
.row {
  height: 26.25px; display: flex; align-items: center; padding: 0 15px 0 4px; white-space: nowrap;
}
.ico { width: 19px; height: 19px; margin-right: 6px; flex: none; display: block; }
.ico svg { width: 19px; height: 19px; display: block; }
.i-green { color: #59a869; }
.i-gray { color: #6e6e6e; }
.i-lgray { color: #aeb6bc; }
.lbl { flex: 1; }
.key { color: #555; letter-spacing: .25px; }
.more { width: 8px; height: 14px; color: #666; margin-right: -10px; flex: none; }
.sub .row { padding-right: 15px; }
.sub .more { margin-right: -9px; }
.hi { background: #1a78c2; color: #fff; }
.hi .more { color: #cfe4f5; }
.sep { height: 3.75px; position: relative; }
.sep::after {
  content: ""; position: absolute; left: 0; right: 0; top: 1px; height: 1px; background: #cfcfcf;
}
.sep.thick::after { height: 2px; }
```
